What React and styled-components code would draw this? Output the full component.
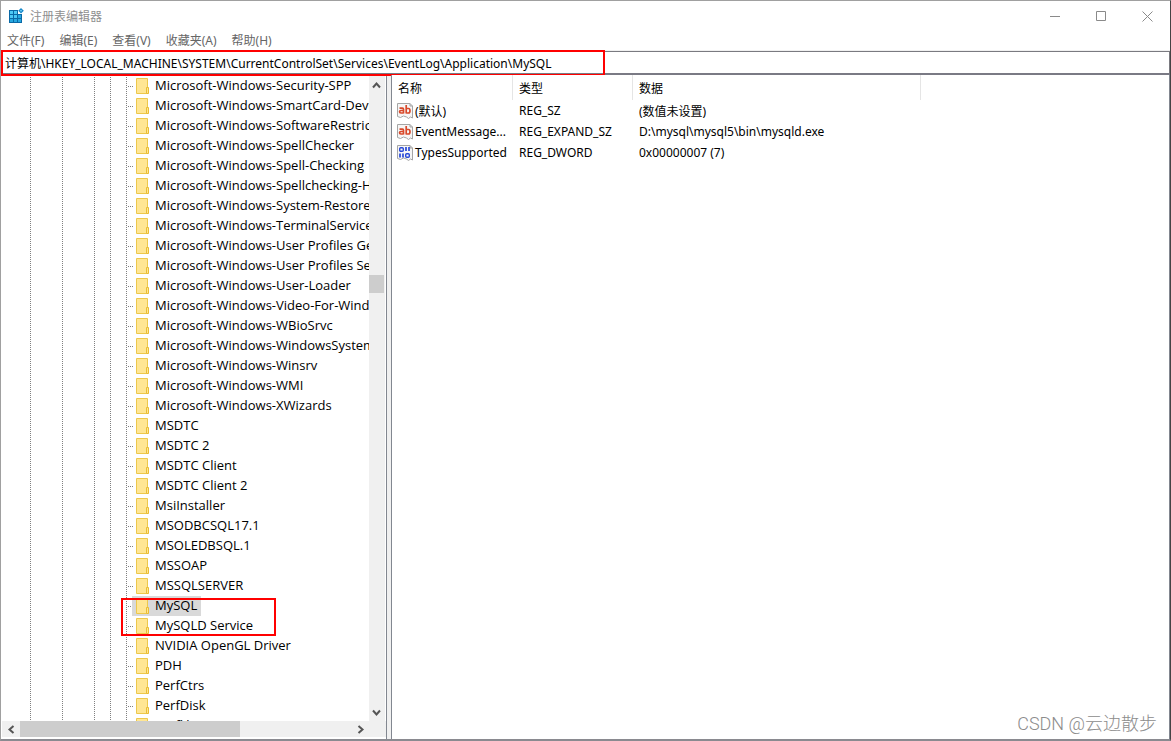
import * as React from 'react'
import styled, { createGlobalStyle } from 'styled-components'

const menus = ['文件(F)', '编辑(E)', '查看(V)', '收藏夹(A)', '帮助(H)']

const treeKeys = [
  'Microsoft-Windows-Security-SPP',
  'Microsoft-Windows-SmartCard-Devic',
  'Microsoft-Windows-SoftwareRestrict',
  'Microsoft-Windows-SpellChecker',
  'Microsoft-Windows-Spell-Checking',
  'Microsoft-Windows-Spellchecking-H',
  'Microsoft-Windows-System-Restore',
  'Microsoft-Windows-TerminalServices',
  'Microsoft-Windows-User Profiles Ge',
  'Microsoft-Windows-User Profiles Ser',
  'Microsoft-Windows-User-Loader',
  'Microsoft-Windows-Video-For-Wind',
  'Microsoft-Windows-WBioSrvc',
  'Microsoft-Windows-WindowsSystem',
  'Microsoft-Windows-Winsrv',
  'Microsoft-Windows-WMI',
  'Microsoft-Windows-XWizards',
  'MSDTC',
  'MSDTC 2',
  'MSDTC Client',
  'MSDTC Client 2',
  'MsiInstaller',
  'MSODBCSQL17.1',
  'MSOLEDBSQL.1',
  'MSSOAP',
  'MSSQLSERVER',
  'MySQL',
  'MySQLD Service',
  'NVIDIA OpenGL Driver',
  'PDH',
  'PerfCtrs',
  'PerfDisk',
  'Perflib',
]

const values = [
  { name: '(默认)', type: 'REG_SZ', data: '(数值未设置)' },
  { name: 'EventMessage...', type: 'REG_EXPAND_SZ', data: 'D:\\mysql\\mysql5\\bin\\mysqld.exe' },
  { name: 'TypesSupported', type: 'REG_DWORD', data: '0x00000007 (7)', binary: true },
]

const AppIcon = () => (
  <svg width="16" height="16" viewBox="0 0 16 16" aria-hidden="true">
    <path d="M1 2h9v4h4v9H1z" fill="#0a69a6" />
    <path d="M2 3h3v3H2zM6 3h3v3H6zM2 7h3v3H2zM6 7h3v3H6z" fill="#4cc8f4" />
    <path d="M10 7h3v3h-3zM2 11h3v3H2zM6 11h3v3H6zM10 11h3v3h-3z" fill="#27a8e0" />
    <path d="M13 0l2.800 2.700L13 5.400l-2.800-2.700z" fill="#1587c9" />
    <path d="M13 1.700l1 1-1 1-1-1z" fill="#7fdcff" />
  </svg>
)

const FolderIcon = () => (
  <svg width="14" height="16" viewBox="0 0 14 16" aria-hidden="true">
    <path d="M.5.5h11v15H.5z" fill="#ffe694" stroke="#edc84c" />
    <path d="M10.500 9.500h2v6h-2z" fill="#ffe694" stroke="#e9bd35" />
  </svg>
)

const ValueIcon = ({ binary }) => (
  <svg width="16" height="16" viewBox="0 0 16 16" aria-hidden="true">
    <path d="M.5.5H13l2.500 2.500v12l-2-1-2 1.500-2-1.500-3-1-3 1.500-3-1z" fill="#f6f6f6" stroke="#a5a5a5" />
    <path d="M13 .5V3h2.500" fill="none" stroke="#a5a5a5" />
    {binary ? (
      <g fill="none" stroke="#2748d8">
        <rect x="2.700" y="2.700" width="3.600" height="3.600" rx="1" strokeWidth="1.400" />
        <path d="M9 2v4M12 2v4M3 8.500v4M6 8.500v4" strokeWidth="1.700" />
        <rect x="8.700" y="8.700" width="3.600" height="3.600" rx="1" strokeWidth="1.400" />
      </g>
    ) : (
      <g fill="none" stroke="#d9492a" strokeWidth="1.700">
        <path d="M2.500 5.200h3q1 0 1 1V10.500M6.500 7.500H4q-1.500 0-1.500 1.200T4 10h2.500" />
        <path d="M9.200 2v8.500M9.200 5.500h2.300q1.500 0 1.500 2.200T11.500 10H9.200" />
      </g>
    )}
  </svg>
)

const Chevron = ({ d }) => (
  <svg width="9" height="9" viewBox="0 0 9 9" aria-hidden="true">
    <path d={d} fill="none" stroke="#555" strokeWidth="2" />
  </svg>
)

const App = () => {
  const [selected, setSelected] = React.useState('MySQL')
  const [path, setPath] = React.useState(
    '计算机\\HKEY_LOCAL_MACHINE\\SYSTEM\\CurrentControlSet\\Services\\EventLog\\Application\\MySQL'
  )

  return (
    <>
      <GlobalStyle />
      <Window>
        <TitleBar>
          <AppIcon />
          <Title>注册表编辑器</Title>
          <WindowButton aria-label="最小化">
            <svg width="11" height="11"><path d="M0 5.500h10" stroke="#8a8a8a" /></svg>
          </WindowButton>
          <WindowButton aria-label="最大化">
            <svg width="11" height="11"><path d="M.5.5h9v9h-9z" fill="none" stroke="#8a8a8a" /></svg>
          </WindowButton>
          <WindowButton aria-label="关闭">
            <svg width="11" height="11"><path d="M.5.5l10 10M10.500.5l-10 10" stroke="#8a8a8a" /></svg>
          </WindowButton>
        </TitleBar>
        <MenuBar>
          {menus.map((menu) => (
            <MenuButton key={menu}>{menu}</MenuButton>
          ))}
        </MenuBar>
        <AddressBar>
          <AddressInput aria-label="地址" value={path} onChange={(e) => setPath(e.target.value)} />
          <AddressMark />
        </AddressBar>
        <Panes>
          <TreePane>
            <TreeArea>
              <Tree>
                {treeKeys.map((name) => (
                  <TreeRow key={name}>
                    <TreeButton $selected={name === selected} onClick={() => setSelected(name)}>
                      <FolderIcon />
                      <TreeLabel>{name}</TreeLabel>
                    </TreeButton>
                    {name === 'MySQL' && <TreeMark />}
                  </TreeRow>
                ))}
              </Tree>
              <VerticalBar>
                <ScrollButton aria-label="向上"><Chevron d="M1 6.500l3.500-4 3.500 4" /></ScrollButton>
                <Gap $grow={181} />
                <VerticalThumb />
                <Gap $grow={411} />
                <ScrollButton aria-label="向下"><Chevron d="M1 2.500l3.500 4 3.500-4" /></ScrollButton>
              </VerticalBar>
            </TreeArea>
            <HorizontalBar>
              <ScrollButton $wide aria-label="向左"><Chevron d="M6.500 1l-4 3.500 4 3.500" /></ScrollButton>
              <Gap $grow={220} $thumb />
              <Gap $grow={111} />
              <ScrollButton $wide aria-label="向右"><Chevron d="M2.500 1l4 3.500-4 3.500" /></ScrollButton>
              <Corner />
            </HorizontalBar>
          </TreePane>
          <ValuePane>
            <ValueTable>
              <colgroup>
                <Col $width={121} />
                <Col $width={120} />
                <Col $width={288} />
                <col />
              </colgroup>
              <thead>
                <tr>
                  <HeadCell>名称</HeadCell>
                  <HeadCell>类型</HeadCell>
                  <HeadCell>数据</HeadCell>
                  <td />
                </tr>
              </thead>
              <tbody>
                {values.map((value) => (
                  <tr key={value.name}>
                    <NameCell>
                      <ValueName>
                        <ValueIcon binary={value.binary} />
                        {value.name}
                      </ValueName>
                    </NameCell>
                    <Cell>{value.type}</Cell>
                    <Cell>{value.data}</Cell>
                    <td />
                  </tr>
                ))}
              </tbody>
            </ValueTable>
            <Watermark>CSDN @云边散步</Watermark>
          </ValuePane>
        </Panes>
      </Window>
    </>
  )
}

const GlobalStyle = createGlobalStyle`
  * {
    box-sizing: border-box;
  }
  body {
    margin: 0;
    background: #fff;
  }
  body, button, input {
    font-family: 'Noto Sans', 'Noto Sans CJK SC', sans-serif;
    font-size: 12px;
    color: #000;
  }
  button {
    border: 0;
    padding: 0;
    background: none;
  }
  svg {
    display: block;
    flex-shrink: 0;
  }
`
const Window = styled.div`
  display: flex;
  flex-direction: column;
  height: 100vh;
  border: 1px solid #a0a0a0;
  border-right-color: #444;
  border-bottom: 2px solid #8a8a90;
`
const TitleBar = styled.header`
  display: flex;
  align-items: center;
  height: 30px;
  padding-left: 7px;
`
const Title = styled.span`
  flex: 1;
  padding-left: 6px;
  color: #8f8f8f;
`
const WindowButton = styled.button`
  display: flex;
  align-items: center;
  justify-content: center;
  width: 46px;
  height: 30px;
`
const MenuBar = styled.nav`
  display: flex;
  gap: 15px;
  height: 20px;
  padding: 1px 0 0 6px;
  border-bottom: 1px solid #f0f0f0;
`
const MenuButton = styled.button`
  color: #666;
  line-height: 18px;
`
const AddressBar = styled.div`
  position: relative;
  height: 24px;
  border: 1px solid #7a7a80;
  border-bottom: 2px solid #7a7a84;
  border-left: 0;
`
const AddressInput = styled.input`
  display: block;
  width: 100%;
  height: 21px;
  padding: 0 4px;
  border: 0;
  outline: 0;
  background: #fff;
`
// red frame around the key path
const AddressMark = styled.div`
  position: absolute;
  top: -2px;
  left: 0;
  width: 604px;
  height: 26px;
  border: 2px solid #f00;
  pointer-events: none;
`
const Panes = styled.main`
  display: flex;
  flex: 1;
  min-height: 0;
  background: #f0f0f0;
`
const TreePane = styled.section`
  display: flex;
  flex-direction: column;
  width: 386px;
  flex-shrink: 0;
  padding: 0 0 2px 1px;
  border-right: 1px solid #828790;
  background: #fff;
`
const TreeArea = styled.div`
  display: flex;
  flex: 1;
  min-height: 0;
`
const guide = 'repeating-linear-gradient(#808080 0 1px, transparent 1px 2px)'
const Tree = styled.ul`
  flex: 1;
  min-width: 0;
  margin: 0;
  padding: 1px 0 0;
  overflow: hidden;
  list-style: none;
  background: ${[28, 60, 92, 108, 124].map((x) => `${guide} ${x}px 0 / 1px 100% no-repeat`).join(', ')};
`
const TreeRow = styled.li`
  position: relative;
  display: flex;
  align-items: center;
  height: 20px;
  padding-left: 130px;
  background: repeating-linear-gradient(90deg, #808080 0 1px, transparent 1px 2px) 126px 10px / 5px 1px no-repeat;
`
const TreeButton = styled.button`
  display: flex;
  align-items: center;
  gap: 5px;
  height: 20px;
  padding: 0 4px;
  white-space: nowrap;
  background: ${(props) => (props.$selected ? '#d9d9d9' : 'none')};
`
const TreeLabel = styled.span`
  padding-bottom: 2px;
  font-family: 'Open Sans', sans-serif;
  font-size: 13px;
`
const TreeMark = styled.div`
  position: absolute;
  top: 2px;
  left: 119px;
  width: 155px;
  height: 38px;
  border: 2px solid #f00;
  pointer-events: none;
  z-index: 1;
`
const VerticalBar = styled.div`
  display: flex;
  flex-direction: column;
  width: 16px;
  margin-right: 1px;
  padding-top: 2px;
  background: #f0f0f0;
`
const HorizontalBar = styled.div`
  display: flex;
  height: 16px;
  background: #f0f0f0;
`
const ScrollButton = styled.button`
  display: flex;
  align-items: center;
  justify-content: center;
  width: ${(props) => (props.$wide ? 18 : 15)}px;
  height: 17px;
  flex-shrink: 0;
`
const Gap = styled.div`
  flex: ${(props) => props.$grow} 1 0;
  background: ${(props) => (props.$thumb ? '#cdcdcd' : 'transparent')};
`
const VerticalThumb = styled.div`
  width: 15px;
  height: 18px;
  background: #cdcdcd;
`
const Corner = styled.div`
  width: 17px;
`
const ValuePane = styled.section`
  position: relative;
  flex: 1;
  min-width: 0;
  margin-left: 4px;
  border-left: 1px solid #828790;
  border-right: 1px solid #828790;
  background: #fff;
`
const ValueTable = styled.table`
  width: 100%;
  table-layout: fixed;
  border-spacing: 0;
`
const Col = styled.col`
  width: ${(props) => props.$width}px;
`
const HeadCell = styled.th`
  height: 25px;
  padding: 0 0 0 6px;
  border-right: 1px solid #e5e5e5;
  font-weight: normal;
  text-align: left;
`
const Cell = styled.td`
  height: 21px;
  padding: 0 0 0 6px;
  white-space: nowrap;
`
const NameCell = styled(Cell)`
  padding-left: 5px;
`
const ValueName = styled.span`
  display: flex;
  align-items: center;
  gap: 2px;
`
const Watermark = styled.span`
  position: absolute;
  right: 12px;
  bottom: 4px;
  font-family: Roboto, 'Noto Sans CJK SC', sans-serif;
  font-size: 18px;
  font-weight: 300;
  color: #8c8c8c;
`

export default App
